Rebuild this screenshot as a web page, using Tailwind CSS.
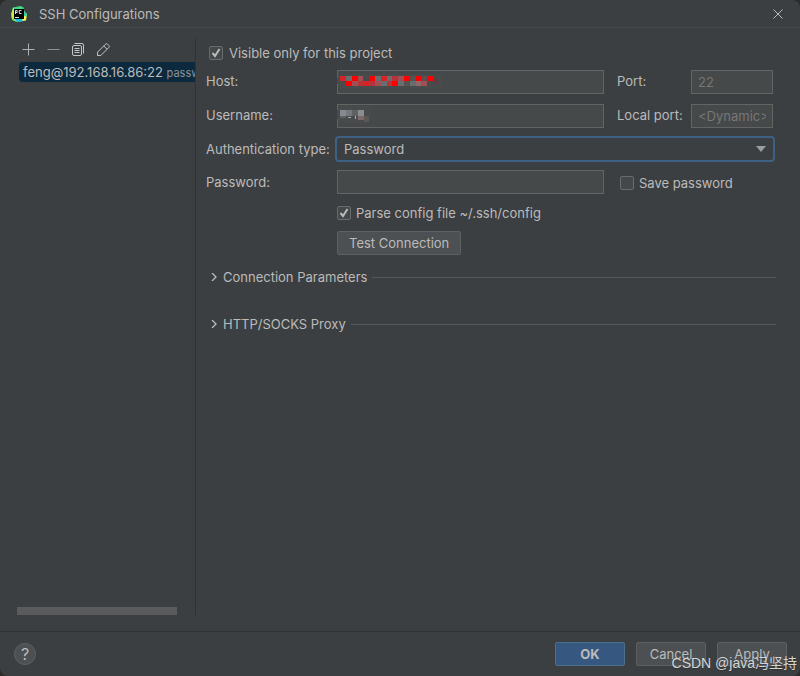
<!DOCTYPE html>
<html lang="en">
  <head>
    <meta charset="UTF-8" />
    <meta name="viewport" content="width=device-width, initial-scale=1.0" />
    <title>SSH Configurations</title>
    <script src="https://cdn.jsdelivr.net/npm/@tailwindcss/browser@4"></script>
  </head>
  <body class="bg-[#2b2b2b] font-[Inter,'Noto_Sans_CJK_SC',sans-serif] text-[13px] leading-4 text-[#bbbbbb]">
    <div class="relative flex flex-col min-h-screen bg-[#3c3f41] rounded-lg overflow-hidden">
      <header class="flex items-center h-7 pl-[11px] pr-4 border-b border-[#484b4d]">
        <svg class="w-4 h-4 mr-3" viewBox="0 0 16 16">
          <defs>
            <linearGradient id="logo" x1="0" y1="0" x2="1" y2="1">
              <stop offset="0" stop-color="#21d789" />
              <stop offset="0.45" stop-color="#4fe07a" />
              <stop offset="0.8" stop-color="#fcf84a" />
              <stop offset="1" stop-color="#fcf84a" />
            </linearGradient>
          </defs>
          <path fill="url(#logo)" d="M2 1.500 9.500 0l3 1.500 1 4L16 8l-1 6.500L6 16l-5-2L0 8z" />
          <path fill="#22d0b5" d="M12 2l1.500 4L16 8l-1 2.500-2-1z" />
          <path fill="#c9ee4d" d="M2 2l1-.5V12l-2 1L.500 8z" />
          <path fill="#12b9e0" d="M4 13h7l1 2.200L6 16z" />
          <path fill="#000" d="M3 3h10v10H3z" />
          <path fill="none" stroke="#ddd" d="M4.500 8V4.500h1.700v2H4.500M10.500 4.500H8.300v3h2.200M4 11.500h4" />
        </svg>
        <h1>SSH Configurations</h1>
        <button class="ml-auto" aria-label="Close">
          <svg class="w-3 h-3" viewBox="0 0 12 12" fill="none" stroke="#bbbbbb">
            <path d="M1.500 1.500l9 9M10.500 1.500l-9 9" />
          </svg>
        </button>
      </header>

      <main class="flex flex-1 pt-2.5 pb-4">
        <aside class="flex flex-col w-[196px] shrink-0 border-r border-[#303234]">
          <div class="flex items-start gap-[9px] h-6 pt-[3px] pl-5">
            <button aria-label="Add">
              <svg class="w-4 h-4" viewBox="0 0 16 16" fill="none" stroke="#afb1b3"><path d="M2.500 8.500h12M8.500 2.500v12" /></svg>
            </button>
            <button aria-label="Remove">
              <svg class="w-4 h-4" viewBox="0 0 16 16" fill="none" stroke="#8f9193"><path d="M2.500 8.500h12" /></svg>
            </button>
            <button aria-label="Copy">
              <svg class="w-4 h-4" viewBox="0 0 16 16" fill="none" stroke="#c3c5c7">
                <rect x="2.500" y="4.500" width="9" height="10" rx="1.500" />
                <path d="M4.500 2.500H12a1.500 1.500 0 0 1 1.500 1.500v8.500M4.500 7.500h5M4.500 9.500h5M4.500 11.500h5" />
              </svg>
            </button>
            <button aria-label="Edit">
              <svg class="w-4 h-4" viewBox="0 0 16 16" fill="none" stroke="#c3c5c7" stroke-linejoin="round">
                <path d="M2.500 14.500v-3.300l8-8a1.500 1.500 0 0 1 2.100 0l1.200 1.200a1.500 1.500 0 0 1 0 2.100l-8 8zM8.800 5l3.200 3.200" />
              </svg>
            </button>
          </div>
          <ul class="flex-1 pl-[19px] overflow-hidden">
            <li class="h-5 pl-1 rounded-l-sm bg-[#0d293e] leading-5 whitespace-nowrap overflow-hidden">feng@192.168.16.86:22 <span class="text-[11px] text-[#8c9499]">password</span></li>
          </ul>
          <div class="h-2 w-40 ml-[17px] bg-[#595b5d]"></div>
        </aside>

        <form class="flex-1 pl-2.5 pr-6">
          <label class="flex items-center gap-1.5 h-[30px] pl-[3px]">
            <span class="relative flex">
              <input type="checkbox" checked class="peer appearance-none w-3.5 h-3.5 rounded-xs border border-[#6b6b6b] bg-[#43494a]" />
              <svg class="absolute inset-0 w-3.5 h-3.5 hidden peer-checked:block" viewBox="0 0 14 14" fill="none" stroke="#bbbbbb" stroke-width="2"><path d="M3.500 7l2.500 3 4.500-7" /></svg>
            </span>
            Visible only for this project
          </label>

          <div class="grid grid-cols-[131px_1fr_87px_82px] items-center gap-y-2.5 pr-[3px] pt-0.5">
            <label for="host" class="pb-0.5">Host:</label>
            <div class="relative">
              <input id="host" type="text" class="block w-full h-6 px-1.5 border border-[#646464] bg-[#45494a] outline-none" />
              <svg class="absolute left-0 top-1 w-[108px] h-4" viewBox="0 0 108 16" shape-rendering="crispEdges">
                <rect x="0" y="0" width="106" height="14" rx="6" fill="#484b4c" />
                <path fill="#ff0000" d="M15 2h6v5h-6zM32 2h6v5h-6zM67 2h6v5h-6zM79 2h6v5h-6zM90 2h6v5h-6zM9 7h6v5H9zM55 7h6v5h-6z" />
                <path fill="#d92226" d="M3 2h6v5H3zM44 2h6v5h-6zM26 7h6v5h-6z" />
                <path fill="#b63338" d="M21 7h5v5h-5zM32 7h6v5h-6zM55 2h6v5h-6zM50 7h5v5h-5z" />
                <path fill="#9f5054" d="M21 2h5v5h-5zM61 2h6v5h-6zM15 7h6v5h-6zM38 7h6v5h-6zM84 7h6v5h-6z" />
                <path fill="#696d6f" d="M9 2h6v5H9zM38 2h6v5h-6zM50 2h5v5h-5zM44 7h6v5h-6zM61 7h6v5h-6zM73 7h6v5h-6z" />
                <path fill="#8f686b" d="M79 7h5v5h-5z" />
                <path fill="#585353" d="M73 2h6v5h-6zM85 2h5v5h-5zM67 7h6v5h-6z" />
                <path fill="#5a4043" d="M97 4h5v6h-5z" />
              </svg>
            </div>
            <label for="port" class="pl-[13px] pb-0.5">Port:</label>
            <input id="port" type="text" value="22" disabled class="w-full h-6 px-1.5 border border-[#646464] bg-[#45494a] text-[#777777]" />

            <label for="username" class="pb-0.5">Username:</label>
            <div class="relative">
              <input id="username" type="text" class="block w-full h-6 px-1.5 border border-[#646464] bg-[#45494a] outline-none" />
              <svg class="absolute left-0 top-0.5 w-9 h-5" viewBox="0 0 36 20" shape-rendering="crispEdges">
                <rect x="0" y="0" width="34" height="17" rx="6" fill="#484b4c" />
                <path fill="#858a8f" d="M3 4h6v6H3z" />
                <path fill="#75797d" d="M9 4h6v6H9z" />
                <path fill="#5f6265" d="M15 4h6v6h-6zM3 10h6v2H3z" />
                <path fill="#8b8c8f" d="M21 4h6v6h-6z" />
                <path fill="#a9aaab" d="M11 11h3v1h-3zM18 10h1v3h-1z" />
                <path fill="#7a6b68" d="M21 10h6v4h-6z" />
                <path fill="#5c5753" d="M27 10h5v6h-5z" />
              </svg>
            </div>
            <label for="local-port" class="pl-[13px] pb-0.5">Local port:</label>
            <input id="local-port" type="text" placeholder="&lt;Dynamic&gt;" disabled class="w-full h-6 px-1.5 border border-[#646464] bg-[#45494a] placeholder:text-[#777777]" />

            <label for="auth">Authentication type:</label>
            <div class="relative col-span-3">
              <select id="auth" class="block appearance-none w-full h-[22px] px-[7px] rounded-xs bg-[#3c3f41] ring-2 ring-[#3d6185] outline-none">
                <option>Password</option>
              </select>
              <svg class="absolute right-[7px] top-2 w-2.5 h-1.5 pointer-events-none" viewBox="0 0 10 6"><path fill="#9a9da0" d="M0 0h10L5 6z" /></svg>
            </div>

            <label for="password">Password:</label>
            <input id="password" type="password" class="w-full h-6 px-1.5 border border-[#646464] bg-[#45494a] outline-none" />
            <label class="col-span-2 flex items-center gap-[5px] pl-4 pt-0.5">
              <input type="checkbox" class="appearance-none w-3.5 h-3.5 rounded-xs border border-[#6b6b6b] bg-[#43494a]" />
              Save password
            </label>

            <label class="col-start-2 col-span-3 flex items-center gap-[5px] pt-px">
              <span class="relative flex">
                <input type="checkbox" checked class="peer appearance-none w-3.5 h-3.5 rounded-xs border border-[#6b6b6b] bg-[#43494a]" />
                <svg class="absolute inset-0 w-3.5 h-3.5 hidden peer-checked:block" viewBox="0 0 14 14" fill="none" stroke="#bbbbbb" stroke-width="2"><path d="M3.500 7l2.500 3 4.500-7" /></svg>
              </span>
              Parse config file ~/.ssh/config
            </label>

            <button type="button" class="col-start-2 justify-self-start h-6 px-[11px] rounded-xs border border-[#5e6060] bg-[#4c5052]">Test Connection</button>
          </div>

          <button type="button" aria-expanded="false" class="flex items-center w-full mt-3.5 pl-1">
            <svg class="w-2 h-2 mr-[5px]" viewBox="0 0 8 8" fill="none" stroke="#bbbbbb" stroke-width="1.300"><path d="M2 0l4 4-4 4" /></svg>
            Connection Parameters
            <span class="flex-1 h-px ml-[5px] bg-[#555759]"></span>
          </button>
          <button type="button" aria-expanded="false" class="flex items-center w-full mt-[31px] pl-1">
            <svg class="w-2 h-2 mr-[5px]" viewBox="0 0 8 8" fill="none" stroke="#bbbbbb" stroke-width="1.300"><path d="M2 0l4 4-4 4" /></svg>
            HTTP/SOCKS Proxy
            <span class="flex-1 h-px ml-[5px] bg-[#555759]"></span>
          </button>
        </form>
      </main>

      <footer class="flex items-center gap-[11px] h-[45px] pl-3.5 pr-[13px] border-t border-[#303234]">
        <button class="w-[22px] h-[22px] mr-auto rounded-full border border-[#5e6060] bg-[#4c5052] text-base leading-5" aria-label="Help">?</button>
        <button class="w-[70px] h-6 rounded-xs border border-[#4c708c] bg-[#365880] font-bold">OK</button>
        <button class="w-[70px] h-6 rounded-xs border border-[#5e6060] bg-[#4c5052]">Cancel</button>
        <button class="w-[70px] h-6 rounded-xs border border-[#5e6060] bg-[#4c5052]">Apply</button>
      </footer>
      <p class="absolute right-[3px] bottom-[3px] font-['Liberation_Sans','Noto_Sans_CJK_SC',sans-serif] text-sm leading-5 text-[#d4d4d4] text-shadow-xs pointer-events-none">CSDN @java冯坚持</p>
    </div>
  </body>
</html>
